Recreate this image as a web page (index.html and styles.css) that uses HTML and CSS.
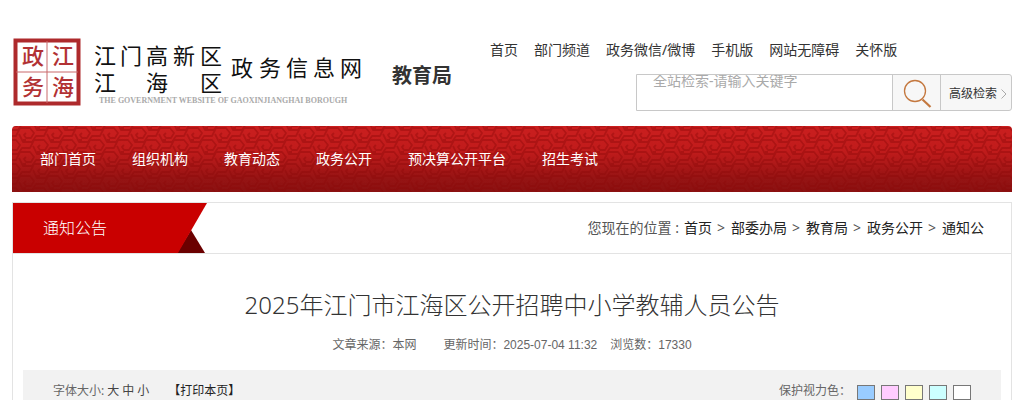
FILE: index.html
```html
<!DOCTYPE html>
<html lang="zh-CN">
<head>
<meta charset="utf-8">
<meta name="viewport" content="width=device-width, initial-scale=1">
<title>2025年江门市江海区公开招聘中小学教辅人员公告</title>
<link rel="stylesheet" href="styles.css">
</head>
<body>
<div class="page">
  <header class="header">
    <a class="logo" href="#" aria-label="江门高新区江海区政务信息网">
      <svg width="350" height="70" viewBox="0 0 350 70">
        <rect x="3.500" y="2.500" width="63" height="63" fill="#fff" stroke="#ae2a2c" stroke-width="4"/>
        <path d="M35 3v62M4 34h62" stroke="#c9696a" stroke-width="1"/>
        <g class="seal">
          <text x="10" y="26">政</text><text x="40" y="26">江</text>
          <text x="10" y="57">务</text><text x="40" y="57">海</text>
        </g>
        <g class="brush">
          <text x="82" y="26">江</text><text x="108" y="26">门</text><text x="134" y="26">高</text><text x="161" y="26">新</text><text x="188" y="26">区</text>
          <text x="82" y="53">江</text><text x="134" y="53">海</text><text x="188" y="53">区</text>
          <text x="219" y="38">政</text><text x="247" y="38">务</text><text x="274" y="38">信</text><text x="301" y="38">息</text><text x="328" y="38">网</text>
        </g>
        <text class="motto" x="87" y="65">THE GOVERNMENT WEBSITE OF GAOXINJIANGHAI BOROUGH</text>
      </svg>
    </a>
    <strong class="dept">教育局</strong>
    <div class="tools">
      <nav class="quick" aria-label="快捷导航">
        <a href="#">首页</a><a href="#">部门频道</a><a href="#">政务微信/微博</a><a href="#">手机版</a><a href="#">网站无障碍</a><a href="#">关怀版</a>
      </nav>
      <form class="search">
        <input class="search-text" type="text" aria-label="全站检索" placeholder="全站检索-请输入关键字">
        <button class="search-go" type="button" aria-label="搜索">
          <svg width="30" height="30" viewBox="0 0 30 30" fill="none" stroke="#c4783f">
            <circle cx="12" cy="12" r="10.500" stroke-width="1.300"/>
            <path d="M19.500 20.500l8 7.500" stroke-width="2.200"/>
          </svg>
        </button>
        <a class="search-more" href="#">高级检索
          <svg width="6" height="10" viewBox="0 0 6 10" fill="none" stroke="#aaa"><path d="M.5 .5L5 5L.5 9.500"/></svg>
        </a>
      </form>
    </div>
  </header>

  <nav class="menu" aria-label="栏目导航">
    <svg class="menu-pattern" aria-hidden="true">
      <defs>
        <g id="coil-mark" fill="none" stroke="#8c0808" stroke-width="1.800" stroke-linejoin="round">
          <path d="M-14 4h4l4-8h10l4 5-3 5h-5l-2-3 2-2"/>
          <path d="M14-4h-3M-7 2l4 8h9l4-6h4"/>
        </g>
        <pattern id="coil" width="28" height="24" patternUnits="userSpaceOnUse">
          <use href="#coil-mark" x="14" y="6"/>
          <use href="#coil-mark" x="0" y="18"/>
          <use href="#coil-mark" x="28" y="18"/>
          <use href="#coil-mark" x="0" y="-6"/>
          <use href="#coil-mark" x="28" y="-6"/>
          <use href="#coil-mark" x="14" y="30"/>
        </pattern>
      </defs>
      <rect width="100%" height="100%" fill="url(#coil)"/>
    </svg>
    <a href="#">部门首页</a><a href="#">组织机构</a><a href="#">教育动态</a><a href="#">政务公开</a><a href="#">预决算公开平台</a><a href="#">招生考试</a>
  </nav>

  <main class="panel">
    <div class="panel-head">
      <h2 class="ribbon">
        <svg class="ribbon-shape" width="194" height="50" viewBox="0 0 194 50" aria-hidden="true">
          <path d="M178 27L192 50H164z" fill="#6b0000"/>
          <path d="M0 0H194L165 50H0z" fill="#c90000"/>
        </svg>
        <span class="ribbon-text">通知公告</span>
      </h2>
      <nav class="crumbs" aria-label="当前位置">
        <span>您现在的位置 :</span>
        <a href="#">首页</a><span class="sep">&gt;</span><a href="#">部委办局</a><span class="sep">&gt;</span><a href="#">教育局</a><span class="sep">&gt;</span><a href="#">政务公开</a><span class="sep">&gt;</span><a href="#">通知公</a>
      </nav>
    </div>
    <article class="article">
      <h1 class="title">2025年江门市江海区公开招聘中小学教辅人员公告</h1>
      <p class="meta"><span class="source">文章来源：本网</span><span>更新时间：2025-07-04 11:32</span><span>浏览数：17330</span></p>
      <div class="options">
        <div class="sizes"><span>字体大小:</span><a href="#">大</a><a href="#">中</a><a href="#">小</a><a class="print" href="#">【打印本页】</a></div>
        <div class="tints"><span class="tints-label">保护视力色：</span>
          <button class="tint blue" type="button" aria-label="蓝色"></button>
          <button class="tint pink" type="button" aria-label="粉色"></button>
          <button class="tint yellow" type="button" aria-label="黄色"></button>
          <button class="tint cyan" type="button" aria-label="青色"></button>
          <button class="tint white" type="button" aria-label="白色"></button>
        </div>
      </div>
    </article>
  </main>
</div>
</body>
</html>
```
FILE: styles.css
```css
* { box-sizing: border-box; }

body {
  margin: 0;
  background: #fff;
  color: #333;
  font: 14px/20px "Noto Sans", "Noto Sans CJK SC", sans-serif;
}

a { color: inherit; text-decoration: none; }

.page { max-width: 1000px; margin: 0 auto; }

@media (max-width: 1000px) {
  .page { margin: 0 12px; }
}

.header { display: flex; align-items: flex-start; padding-bottom: 15px; }
.logo { flex: none; margin-top: 38px; }
.logo svg { display: block; }
.seal { font: 500 22px "Liberation Serif", "Noto Sans CJK SC", sans-serif; fill: #b23234; }
.brush { font: 400 22px "Liberation Serif", "Noto Sans CJK SC", sans-serif; fill: #111; }
.motto { font: 700 8px "Liberation Serif", serif; fill: #aaa; }
.dept { flex: none; margin: 66px 0 0 30px; font-size: 20px; }

.tools { flex: 1; margin: 40px 0 0 38px; display: flex; flex-direction: column; gap: 14px; }
.quick { display: flex; gap: 16px; white-space: nowrap; }

.search {
  align-self: flex-end;
  display: flex;
  width: 376px;
  height: 37px;
  border: 1px solid #c8c8c8;
  border-radius: 0 3px 3px 0;
  background: #f7f7f7;
}
.search-text {
  flex: 1;
  min-width: 0;
  padding: 0 16px 24px;
  border: 0;
  background: #fff;
  font: 14px/14px "Noto Sans", "Noto Sans CJK SC", sans-serif;
}
.search-text::placeholder { color: #aaa; opacity: 1; }
.search-go {
  width: 49px;
  padding: 3px 0 0 2px;
  border: solid #c8c8c8;
  border-width: 0 1px;
  background: #f7f7f7;
}
.search-go svg { display: block; margin: 0 auto; }
.search-more {
  width: 70px;
  display: flex;
  align-items: center;
  justify-content: flex-end;
  gap: 4px;
  padding: 2px 4px 0 0;
  font-size: 12px;
}

.menu {
  position: relative;
  display: flex;
  gap: 36px;
  padding: 23px 28px;
  border-radius: 4px 4px 0 0;
  overflow: hidden;
  background: linear-gradient(#cc1f1f, #bf1c1c 40%, #961414 80%, #8b1212);
  color: #fff;
}
.menu a { position: relative; }
.menu-pattern { position: absolute; inset: 0; width: 100%; height: 100%; opacity: 0.4; }

.panel { margin-top: 10px; border: solid #e3e3e3; border-width: 1px 1px 0; }
.panel-head {
  display: flex;
  justify-content: space-between;
  align-items: center;
  border-bottom: 1px solid #e3e3e3;
}
.ribbon {
  position: relative;
  width: 194px;
  height: 50px;
  margin: 0;
  padding-left: 30px;
  color: #fff;
  font-size: 16px;
  font-weight: 300;
  line-height: 50px;
}
.ribbon-shape { position: absolute; left: 0; top: 0; }
.ribbon-text { position: relative; }
.crumbs { display: flex; gap: 5px; padding-right: 27px; white-space: nowrap; color: #555; }
.crumbs a { color: #222; }
.sep { width: 9px; }

.article { padding: 32px 10px 0; }
.title { margin: 0; text-align: center; font-size: 24px; line-height: 38px; font-weight: 300; }
.meta {
  display: flex;
  justify-content: center;
  gap: 13px;
  margin: 11px 0 15px;
  color: #666;
  font: 12px/20px "Liberation Sans", "Noto Sans CJK SC", sans-serif;
}
.source { margin-right: 14px; }

.options {
  display: flex;
  justify-content: space-between;
  padding: 12px 30px 0;
  background: #f2f2f2;
  color: #666;
  font-size: 12px;
  line-height: 18px;
}
.sizes, .tints { display: flex; align-items: center; }
.sizes { gap: 3px; }
.sizes a { color: #444; }
.sizes .print { margin-left: 16px; color: #222; }
.tints { gap: 6px; }
.tint { width: 18px; height: 15px; padding: 0; border: 1px solid #777; align-self: flex-end; }
.blue { background: #99ccff; }
.pink { background: #ffccff; }
.yellow { background: #ffffcc; }
.cyan { background: #ccffff; }
.white { background: #fff; }
```
